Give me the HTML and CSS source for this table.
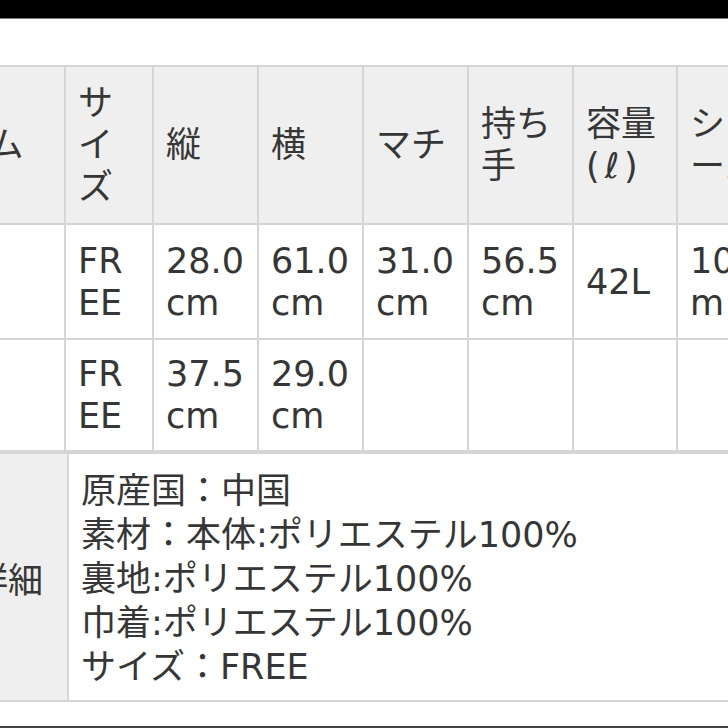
FILE: index.html
```html
<!DOCTYPE html>
<html lang="ja">
<head>
<meta charset="utf-8">
<title>サイズ表</title>
<link rel="stylesheet" href="styles.css">
</head>
<body>
<div class="topbar"></div>
<main class="view">
  <div class="spec">
    <div class="cell head first">アイテム</div>
    <div class="cell head">サイズ</div>
    <div class="cell head">縦</div>
    <div class="cell head">横</div>
    <div class="cell head">マチ</div>
    <div class="cell head">持ち手</div>
    <div class="cell head"><span>容量<br><span class="unit">(ℓ)</span></span></div>
    <div class="cell head">ショール</div>

    <div class="cell first"></div>
    <div class="cell">FREE</div>
    <div class="cell">28.0cm</div>
    <div class="cell">61.0cm</div>
    <div class="cell">31.0cm</div>
    <div class="cell">56.5cm</div>
    <div class="cell">42L</div>
    <div class="cell">100cm</div>

    <div class="cell first"></div>
    <div class="cell">FREE</div>
    <div class="cell">37.5cm</div>
    <div class="cell">29.0cm</div>
    <div class="cell"></div>
    <div class="cell"></div>
    <div class="cell"></div>
    <div class="cell"></div>
  </div>
  <div class="detail">
    <div class="detail-label">商品詳細</div>
    <div class="detail-body">
      <p>原産国：中国</p>
      <p>素材：本体:ポリエステル100%</p>
      <p>裏地:ポリエステル100%</p>
      <p>巾着:ポリエステル100%</p>
      <p>サイズ：FREE</p>
    </div>
  </div>
</main>
<div class="bottombar"></div>
</body>
</html>
```
FILE: styles.css
```css
html, body {
  margin: 0;
  padding: 0;
}
body {
  height: 728px;
  display: flex;
  flex-direction: column;
  background: #fff;
  color: #363636;
  font-family: "DejaVu Sans", "Noto Sans CJK JP", sans-serif;
  font-size: 35px;
  overflow: hidden;
}
.topbar {
  flex: none;
  height: 18px;
  background: #000;
  border-bottom: 1px solid #777;
}
.view {
  flex: none;
  margin-top: 46px;
  overflow: hidden;
}
.spec {
  display: grid;
  grid-template-columns: 198px 86px 103px 103px 103px 103px 102px 120px;
  grid-template-rows: 156px 113px 110px;
  gap: 2px;
  padding: 2px;
  background: #d5d5d5;
  margin-left: -136px;
  width: max-content;
}
.cell {
  background: #fff;
  display: flex;
  align-items: center;
  padding: 0 12px;
  line-height: 42px;
  word-break: break-all;
}
.cell.first {
  padding-left: 21px;
}
.head {
  background: #efefef;
}
.unit {
  letter-spacing: 5px;
  white-space: nowrap;
}
.detail {
  display: grid;
  grid-template-columns: 179px 800px;
  gap: 2px;
  padding: 2px;
  background: #d5d5d5;
  margin-left: -114px;
  width: max-content;
}
.detail-label {
  background: #efefef;
  display: flex;
  align-items: center;
  padding: 0 12px 0 15px;
  white-space: nowrap;
}
.detail-body {
  background: #fff;
  padding: 15px 12px 11px;
  line-height: 44px;
}
.detail-body p {
  margin: 0;
}
.bottombar {
  flex: none;
  margin-top: auto;
  height: 2px;
  background: #444;
}
```
